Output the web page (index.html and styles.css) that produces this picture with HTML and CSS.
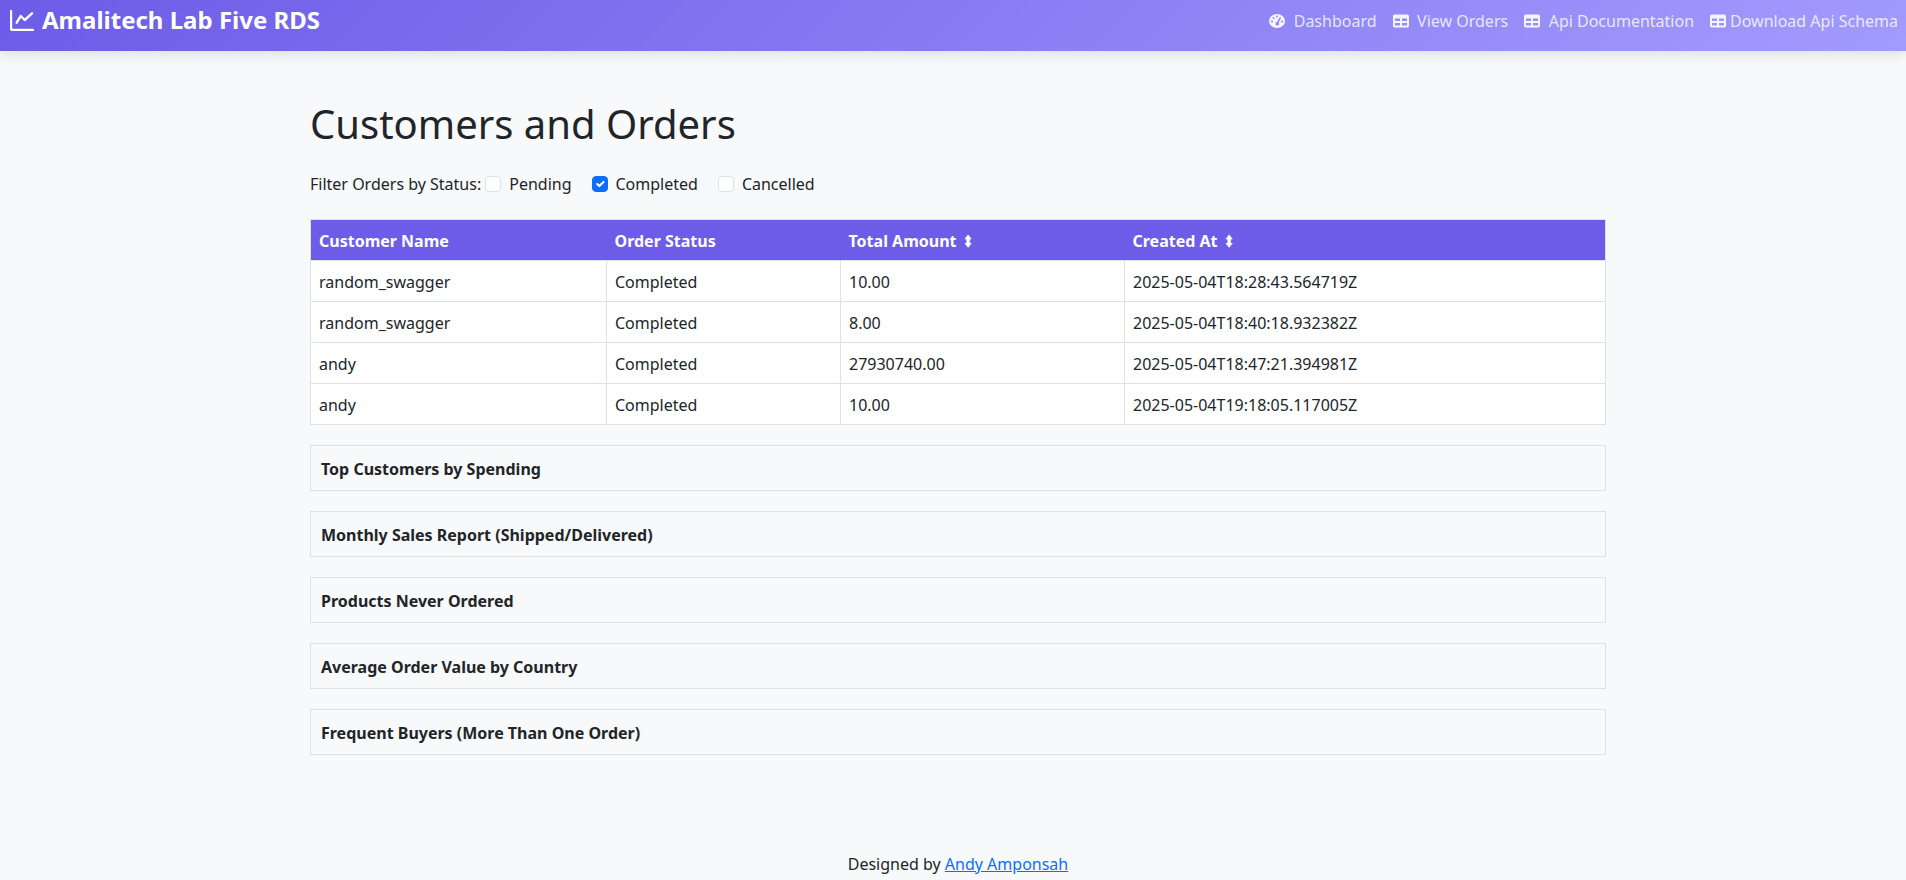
FILE: index.html
```html
<!DOCTYPE html>
<html>
  <head>
    <meta charset="utf-8">
    <title>Amalitech Lab Five RDS</title>
    <link rel="stylesheet" href="styles.css">
  </head>
  <body>
    <nav class="navbar">
      <a class="brand" href="#">
        <svg class="brand-icon" viewBox="0 0 24 21"><path d="M1 1V18a2 2 0 0 0 2 2h20" /><path d="M6.700 12.700l4-6.700 4 4 7.300-6.700" /></svg>
        Amalitech Lab Five RDS
      </a>
      <div class="nav-links">
        <a href="#">
          <svg class="nav-icon" viewBox="0 0 16 16"><path class="solid" d="M8 1a8 7 0 1 0 0 14A8 7 0 0 0 8 1zm0 1.500a1 1 0 1 1 0 2 1 1 0 0 1 0-2zM4.500 4a1 1 0 1 1 0 2 1 1 0 0 1 0-2zm6.900.300a.7.7 0 0 1 .4.900L9.600 9.700a1.700 1.700 0 1 1-1.300-.6l2.200-4.500a.7.7 0 0 1 .9-.3zM3 7.500a1 1 0 1 1 0 2 1 1 0 0 1 0-2zm10 0a1 1 0 1 1 0 2 1 1 0 0 1 0-2z" fill-rule="evenodd" /></svg>
          Dashboard
        </a>
        <a href="#">
          <svg class="nav-icon" viewBox="0 0 16 16"><path class="solid" d="M1.800 1.500h12.400A1.800 1.800 0 0 1 16 3.300v9.400a1.800 1.800 0 0 1-1.800 1.800H1.800A1.800 1.800 0 0 1 0 12.700V3.300A1.800 1.800 0 0 1 1.800 1.500zM2 5.500V8h5V5.500zM9 5.500V8h5V5.500zM2 10v2.500h5V10zM9 10v2.500h5V10z" fill-rule="evenodd" /></svg>
          View Orders
        </a>
        <a href="#">
          <svg class="nav-icon" viewBox="0 0 16 16"><path class="solid" d="M1.800 1.500h12.400A1.800 1.800 0 0 1 16 3.300v9.400a1.800 1.800 0 0 1-1.800 1.800H1.800A1.800 1.800 0 0 1 0 12.700V3.300A1.800 1.800 0 0 1 1.800 1.500zM2 5.500V8h5V5.500zM9 5.500V8h5V5.500zM2 10v2.500h5V10zM9 10v2.500h5V10z" fill-rule="evenodd" /></svg>
          Api Documentation
        </a>
        <a class="tight" href="#">
          <svg class="nav-icon" viewBox="0 0 16 16"><path class="solid" d="M1.800 1.500h12.400A1.800 1.800 0 0 1 16 3.300v9.400a1.800 1.800 0 0 1-1.800 1.800H1.800A1.800 1.800 0 0 1 0 12.700V3.300A1.800 1.800 0 0 1 1.800 1.500zM2 5.500V8h5V5.500zM9 5.500V8h5V5.500zM2 10v2.500h5V10zM9 10v2.500h5V10z" fill-rule="evenodd" /></svg>
          Download Api Schema
        </a>
      </div>
    </nav>

    <main class="container">
      <h1>Customers and Orders</h1>

      <div class="filters">
        <span class="filter-label">Filter Orders by Status:</span>
        <label class="check"><span class="box"></span>Pending</label>
        <label class="check"><span class="box checked"><svg viewBox="0 0 20 20"><path d="M6 10l3 3 6-6" /></svg></span>Completed</label>
        <label class="check"><span class="box"></span>Cancelled</label>
      </div>

      <table class="orders">
        <thead>
          <tr>
            <th class="col-name">Customer Name</th>
            <th class="col-status">Order Status</th>
            <th class="col-amount">Total Amount <span class="sort">⬍</span></th>
            <th>Created At <span class="sort">⬍</span></th>
          </tr>
        </thead>
        <tbody>
          <tr><td>random_swagger</td><td>Completed</td><td>10.00</td><td>2025-05-04T18:28:43.564719Z</td></tr>
          <tr><td>random_swagger</td><td>Completed</td><td>8.00</td><td>2025-05-04T18:40:18.932382Z</td></tr>
          <tr><td>andy</td><td>Completed</td><td>27930740.00</td><td>2025-05-04T18:47:21.394981Z</td></tr>
          <tr><td>andy</td><td>Completed</td><td>10.00</td><td>2025-05-04T19:18:05.117005Z</td></tr>
        </tbody>
      </table>

      <div class="panel">Top Customers by Spending</div>
      <div class="panel">Monthly Sales Report (Shipped/Delivered)</div>
      <div class="panel">Products Never Ordered</div>
      <div class="panel">Average Order Value by Country</div>
      <div class="panel">Frequent Buyers (More Than One Order)</div>
    </main>

    <footer class="footer">Designed by <a href="#">Andy Amponsah</a></footer>
  </body>
</html>
```

FILE: styles.css
```css
* {
  box-sizing: border-box;
}

html,
body {
  height: 880px;
}

body {
  margin: 0;
  background-color: #f8f9fa;
  color: #212529;
  font-family: "Noto Sans", sans-serif;
  font-size: 16px;
  line-height: 24px;
  overflow: hidden;
  display: flex;
  flex-direction: column;
}

.navbar {
  height: 51px;
  flex-shrink: 0;
  padding: 0 8px 9px 10px;
  display: flex;
  align-items: center;
  justify-content: space-between;
  background: linear-gradient(135deg, #6c5ce7, #a29bfe);
  box-shadow: 0 4px 12px rgba(0, 0, 0, 0.1);
}

.brand {
  display: flex;
  align-items: center;
  gap: 8px;
  margin-bottom: 2px;
  color: #fff;
  font-size: 24px;
  font-weight: 700;
  text-decoration: none;
}

.brand-icon {
  width: 24px;
  height: 21px;
  fill: none;
  stroke: #fff;
  stroke-width: 2.4;
  stroke-linecap: round;
  stroke-linejoin: round;
}

.nav-links {
  display: flex;
  gap: 16px;
}

.nav-links a {
  display: flex;
  align-items: center;
  gap: 8.5px;
  color: rgba(255, 255, 255, 0.8);
  text-decoration: none;
}

.nav-links a.tight {
  gap: 4px;
}

.nav-icon {
  width: 16px;
  height: 16px;
}

.solid {
  fill: rgba(255, 255, 255, 0.9);
}

.container {
  width: 1296px;
  margin-left: 310px;
  flex-grow: 1;
}

h1 {
  margin: 49px 0 0;
  font-size: 40px;
  font-weight: 400;
  line-height: 48px;
}

.filters {
  display: flex;
  align-items: center;
  margin-top: 24px;
  height: 24px;
}

.filter-label {
  margin-right: 4px;
}

.check {
  display: flex;
  align-items: center;
  margin-right: 20px;
}

.box {
  width: 16px;
  height: 16px;
  margin-right: 8px;
  border: 1px solid #dee2e6;
  border-radius: 4px;
  background-color: #fff;
}

.box.checked {
  border-color: #0d6efd;
  background-color: #0d6efd;
}

.box svg {
  display: block;
  fill: none;
  stroke: #fff;
  stroke-width: 3;
  stroke-linecap: round;
  stroke-linejoin: round;
}

.orders {
  width: 100%;
  margin-top: 23px;
  margin-bottom: 20px;
  border: 1px solid #dee2e6;
  border-collapse: collapse;
  table-layout: fixed;
  background-color: #fff;
}

.orders th,
.orders td {
  height: 41px;
  padding: 9px 8px 7px;
  border: 1px solid #dee2e6;
  text-align: left;
}

.orders th {
  background-color: #6c5ce7;
  border-left: none;
  border-right: none;
  color: #fff;
  font-weight: 700;
}

.sort {
  display: inline-block;
  transform: scaleX(0.75);
}

.col-name {
  width: 296px;
}

.col-status {
  width: 234px;
}

.col-amount {
  width: 284px;
}

.panel {
  height: 46px;
  margin-bottom: 20px;
  padding: 2px 10px 0;
  display: flex;
  align-items: center;
  border: 1px solid #dee2e6;
  font-weight: 700;
}

.footer {
  height: 28px;
  padding-left: 10px;
  text-align: center;
  flex-shrink: 0;
}

.footer a {
  color: #0d6efd;
}
```
